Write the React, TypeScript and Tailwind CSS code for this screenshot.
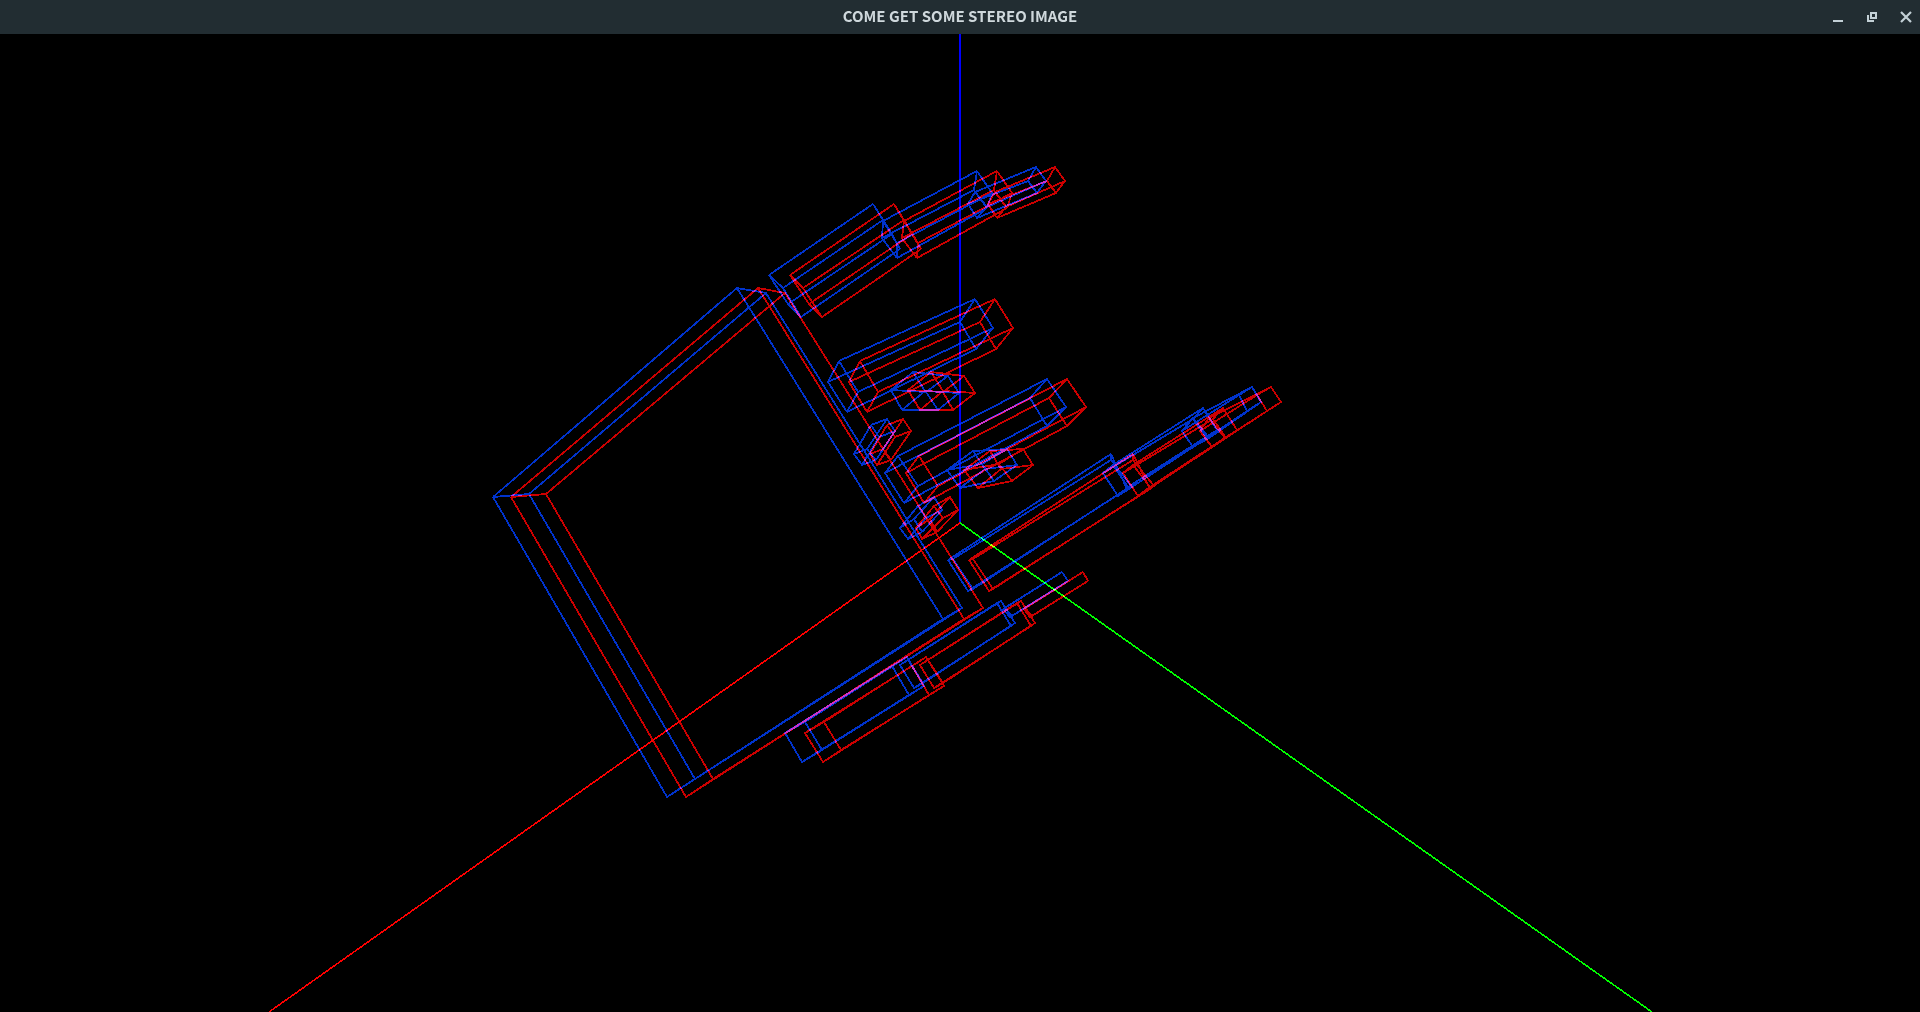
import type { ReactNode } from 'react';

type Point = [x: number, y: number];

/** A vertex as seen by both eyes: x for the left eye, x for the right eye, shared y. */
type StereoVertex = [left: number, right: number, y: number];

/** Four vertices of the near face followed by the four of the far face. */
type Box = StereoVertex[];

const palm: Box = [
  [737, 758, 288], [766, 785, 293], [962, 983, 608], [943, 964, 619],
  [493, 511, 497], [529, 546, 494], [695, 713, 779], [667, 686, 797],
];

const indexFinger: Box[] = [
  [
    [769, 790, 275], [783, 803, 288], [801, 822, 317], [788, 809, 304],
    [873, 894, 204], [883, 904, 220], [900, 921, 249], [892, 912, 234],
  ],
  [
    [883, 904, 221], [882, 902, 238], [897, 917, 258], [897, 918, 243],
    [977, 997, 171], [974, 994, 190], [987, 1007, 208], [992, 1012, 193],
  ],
  [
    [975, 995, 192], [968, 988, 204], [977, 997, 218], [987, 1006, 207],
    [1036, 1055, 167], [1028, 1047, 181], [1037, 1056, 193], [1046, 1065, 181],
  ],
];

const middleFinger: Box[] = [
  [
    [839, 860, 361], [828, 849, 382], [847, 867, 412], [858, 878, 392],
    [975, 995, 299], [960, 980, 322], [976, 996, 349], [993, 1013, 328],
  ],
  [
    [913, 931, 372], [891, 908, 390], [902, 920, 410], [925, 943, 391],
    [948, 964, 376], [926, 943, 392], [938, 953, 410], [959, 975, 393],
  ],
  [
    [854, 870, 454], [862, 877, 465], [876, 891, 460], [867, 883, 449],
    [871, 887, 425], [879, 895, 437], [895, 911, 431], [887, 903, 419],
  ],
];

const ringFinger: Box[] = [
  [
    [898, 919, 456], [885, 906, 473], [904, 924, 503], [918, 938, 486],
    [1047, 1067, 379], [1030, 1049, 398], [1047, 1067, 426], [1066, 1086, 407],
  ],
  [
    [973, 990, 451], [947, 964, 470], [960, 978, 488], [985, 1001, 469],
    [1007, 1023, 449], [982, 999, 464], [994, 1012, 481], [1017, 1033, 465],
  ],
  [
    [900, 916, 528], [908, 922, 539], [922, 937, 532], [914, 930, 519],
    [918, 934, 506], [926, 943, 518], [942, 958, 510], [934, 950, 497],
  ],
];

const littleFinger: Box[] = [
  [
    [948, 969, 560], [953, 973, 559], [973, 993, 589], [968, 989, 591],
    [1111, 1133, 454], [1111, 1133, 460], [1131, 1154, 486], [1127, 1150, 489],
  ],
  [
    [1103, 1123, 473], [1113, 1133, 465], [1128, 1150, 487], [1118, 1138, 496],
    [1193, 1213, 419], [1203, 1223, 408], [1217, 1237, 430], [1207, 1226, 438],
  ],
  [
    [1182, 1200, 431], [1193, 1209, 418], [1209, 1225, 438], [1193, 1212, 447],
    [1239, 1257, 395], [1252, 1271, 387], [1261, 1281, 402], [1247, 1267, 411],
  ],
];

const thumb: Box[] = [
  [
    [785, 805, 733], [805, 824, 722], [822, 841, 750], [802, 823, 762],
    [892, 912, 666], [907, 926, 657], [924, 944, 686], [909, 929, 695],
  ],
  [
    [900, 920, 665], [908, 928, 660], [923, 943, 683], [914, 934, 688],
    [997, 1017, 603], [1001, 1021, 601], [1015, 1035, 623], [1011, 1031, 626],
  ],
  [
    [1003, 1024, 609], [1005, 1025, 608], [1012, 1032, 616], [1010, 1030, 617],
    [1062, 1083, 572], [1062, 1083, 572], [1068, 1088, 581], [1068, 1088, 581],
  ],
];

const hand: Box[] = [
  palm,
  ...indexFinger,
  ...middleFinger,
  ...ringFinger,
  ...littleFinger,
  ...thumb,
];

function wireframe(box: Box, eye: 0 | 1): string {
  const points = box.map((vertex): Point => [vertex[eye], vertex[2]]);
  const face = (corners: Point[]) => `M${corners.map((p) => p.join(' ')).join('L')}Z`;
  const sides = [0, 1, 2, 3].map(
    (i) => `M${points[i].join(' ')}L${points[i + 4].join(' ')}`,
  );
  return face(points.slice(0, 4)) + face(points.slice(4)) + sides.join('');
}

function Eye({ eye, className }: { eye: 0 | 1; className: string }) {
  return (
    <g className={className}>
      {hand.map((box, index) => (
        <path key={index} d={wireframe(box, eye)} />
      ))}
    </g>
  );
}

function Viewport() {
  return (
    <svg
      className="block min-h-0 w-full flex-1 bg-black"
      viewBox="0 34 1920 978"
      preserveAspectRatio="xMidYMid slice"
      role="img"
      aria-label="Stereo wireframe of a hand with three axes"
      fill="none"
      strokeWidth="1.8"
      strokeLinejoin="bevel"
      shapeRendering="crispEdges"
    >
      <Eye eye={0} className="stroke-[#0033cc]" />
      <Eye eye={1} className="stroke-[#cc0000] mix-blend-screen" />
      <g className="mix-blend-screen">
        <path className="stroke-[#0000ff]" strokeWidth="2" d="M960 34V523" />
        <path className="stroke-[#ff0000]" strokeWidth="1.6" d="M960 523L269 1012" />
        <path className="stroke-[#00ff00]" strokeWidth="1.6" d="M960 523L1652 1012" />
      </g>
    </svg>
  );
}

function WindowButton({ label, children }: { label: string; children: ReactNode }) {
  return (
    <button type="button" aria-label={label} className="flex size-7 items-center justify-center">
      <svg className="size-4" viewBox="0 0 16 16" fill="none" stroke="#c3d0d6" strokeWidth="2">
        {children}
      </svg>
    </button>
  );
}

function TitleBar() {
  return (
    <header className="grid h-[34px] shrink-0 grid-cols-[1fr_auto_1fr] items-center bg-[#222d32]">
      <h1 className="col-start-2 pb-0.5 font-['Noto_Sans_CJK_SC','Noto_Sans',sans-serif] text-[15px] leading-5 font-bold text-[#cfd8dc]">
        COME GET SOME STEREO IMAGE
      </h1>
      <div className="flex justify-end gap-1.5">
        <WindowButton label="Minimize">
          <path d="M3 12H13" />
        </WindowButton>
        <WindowButton label="Restore">
          <path d="M7 4H12V9H7Z" />
          <path d="M4 6V12H10" />
        </WindowButton>
        <WindowButton label="Close">
          <path strokeWidth="2.2" d="M3 3L13 13M13 3L3 13" />
        </WindowButton>
      </div>
    </header>
  );
}

export default function App() {
  return (
    <main className="flex h-screen flex-col overflow-hidden bg-black">
      <TitleBar />
      <Viewport />
    </main>
  );
}
